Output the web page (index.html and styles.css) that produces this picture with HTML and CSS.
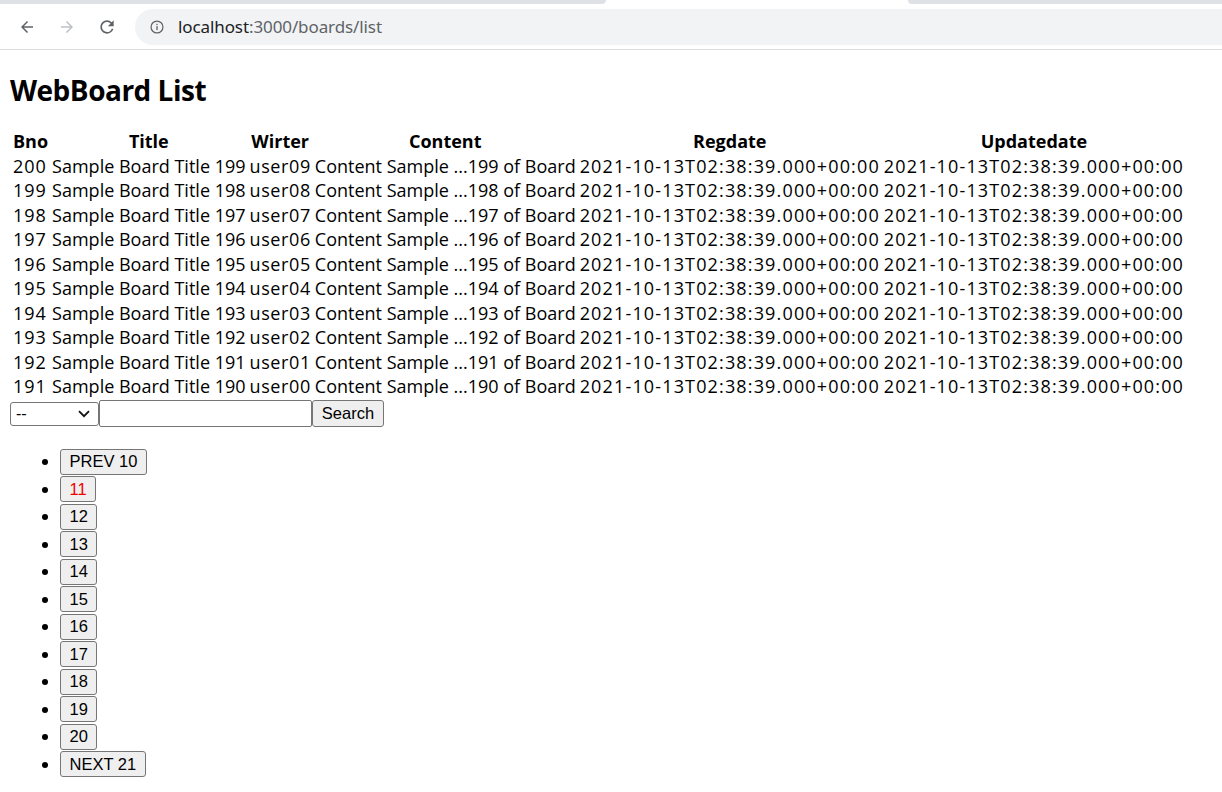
FILE: index.html
```html
<!DOCTYPE html>
<html lang="en">
<head>
<meta charset="utf-8">
<title>WebBoard List</title>
<link rel="stylesheet" href="styles.css">
</head>
<body>
<div class="chrome">
  <div class="tabstrip">
    <div class="tab-left"></div>
    <div class="tab-active"></div>
    <div class="tab-right"></div>
  </div>
  <div class="toolbar">
    <div class="nav">
      <span class="navbtn">
        <svg width="18" height="18" viewBox="0 0 24 24"><path d="M20 11H7.83l5.59-5.59L12 4l-8 8 8 8 1.41-1.41L7.83 13H20v-2z" fill="#5f6368"/></svg>
      </span>
      <span class="navbtn">
        <svg width="18" height="18" viewBox="0 0 24 24"><path d="M12 4l-1.41 1.41L16.17 11H4v2h12.17l-5.58 5.59L12 20l8-8z" fill="#bdc1c6"/></svg>
      </span>
      <span class="navbtn">
        <svg width="20" height="20" viewBox="0 0 24 24"><path d="M17.65 6.35A7.958 7.958 0 0 0 12 4a8 8 0 1 0 7.730 10h-2.08A5.990 5.990 0 0 1 12 18a6 6 0 1 1 0-12c1.66 0 3.14.69 4.22 1.780L13 11h7V4l-2.35 2.35z" fill="#5f6368"/></svg>
      </span>
    </div>
    <div class="omnibox">
      <svg class="info" width="14" height="14" viewBox="0 0 16 16"><circle cx="8" cy="8" r="6.8" fill="none" stroke="#5f6368" stroke-width="1.4"/><rect x="7.25" y="7" width="1.5" height="4.5" fill="#5f6368"/><rect x="7.25" y="4.3" width="1.5" height="1.5" fill="#5f6368"/></svg>
      <span class="url"><span class="host">localhost</span>:3000/boards/list</span>
    </div>
  </div>
</div>

<main class="page">
  <h2 class="title">WebBoard List</h2>
  <table class="board">
    <thead>
      <tr><th>Bno</th><th>Title</th><th>Wirter</th><th>Content</th><th>Regdate</th><th>Updatedate</th></tr>
    </thead>
    <tbody>
      <tr><td class="num">200</td><td>Sample Board Title 199</td><td class="writer">user09</td><td>Content Sample ...199 of Board</td><td class="date">2021-10-13T02:38:39.000+00:00</td><td class="date">2021-10-13T02:38:39.000+00:00</td></tr>
      <tr><td class="num">199</td><td>Sample Board Title 198</td><td class="writer">user08</td><td>Content Sample ...198 of Board</td><td class="date">2021-10-13T02:38:39.000+00:00</td><td class="date">2021-10-13T02:38:39.000+00:00</td></tr>
      <tr><td class="num">198</td><td>Sample Board Title 197</td><td class="writer">user07</td><td>Content Sample ...197 of Board</td><td class="date">2021-10-13T02:38:39.000+00:00</td><td class="date">2021-10-13T02:38:39.000+00:00</td></tr>
      <tr><td class="num">197</td><td>Sample Board Title 196</td><td class="writer">user06</td><td>Content Sample ...196 of Board</td><td class="date">2021-10-13T02:38:39.000+00:00</td><td class="date">2021-10-13T02:38:39.000+00:00</td></tr>
      <tr><td class="num">196</td><td>Sample Board Title 195</td><td class="writer">user05</td><td>Content Sample ...195 of Board</td><td class="date">2021-10-13T02:38:39.000+00:00</td><td class="date">2021-10-13T02:38:39.000+00:00</td></tr>
      <tr><td class="num">195</td><td>Sample Board Title 194</td><td class="writer">user04</td><td>Content Sample ...194 of Board</td><td class="date">2021-10-13T02:38:39.000+00:00</td><td class="date">2021-10-13T02:38:39.000+00:00</td></tr>
      <tr><td class="num">194</td><td>Sample Board Title 193</td><td class="writer">user03</td><td>Content Sample ...193 of Board</td><td class="date">2021-10-13T02:38:39.000+00:00</td><td class="date">2021-10-13T02:38:39.000+00:00</td></tr>
      <tr><td class="num">193</td><td>Sample Board Title 192</td><td class="writer">user02</td><td>Content Sample ...192 of Board</td><td class="date">2021-10-13T02:38:39.000+00:00</td><td class="date">2021-10-13T02:38:39.000+00:00</td></tr>
      <tr><td class="num">192</td><td>Sample Board Title 191</td><td class="writer">user01</td><td>Content Sample ...191 of Board</td><td class="date">2021-10-13T02:38:39.000+00:00</td><td class="date">2021-10-13T02:38:39.000+00:00</td></tr>
      <tr><td class="num">191</td><td>Sample Board Title 190</td><td class="writer">user00</td><td>Content Sample ...190 of Board</td><td class="date">2021-10-13T02:38:39.000+00:00</td><td class="date">2021-10-13T02:38:39.000+00:00</td></tr>
    </tbody>
  </table>

  <form class="search">
    <div class="fake-select">
      <span>--</span>
      <svg width="12" height="8" viewBox="0 0 12 8"><path d="M1 1.2l5 5 5-5" fill="none" stroke="#111" stroke-width="1.8"/></svg>
    </div>
    <input class="keyword" type="text">
    <button class="btn" type="button">Search</button>
  </form>

  <ul class="pager">
    <li><button class="btn" type="button">PREV 10</button></li>
    <li><button class="btn current" type="button">11</button></li>
    <li><button class="btn" type="button">12</button></li>
    <li><button class="btn" type="button">13</button></li>
    <li><button class="btn" type="button">14</button></li>
    <li><button class="btn" type="button">15</button></li>
    <li><button class="btn" type="button">16</button></li>
    <li><button class="btn" type="button">17</button></li>
    <li><button class="btn" type="button">18</button></li>
    <li><button class="btn" type="button">19</button></li>
    <li><button class="btn" type="button">20</button></li>
    <li><button class="btn" type="button">NEXT 21</button></li>
  </ul>
</main>
</body>
</html>
```

FILE: styles.css
```css
* { box-sizing: border-box; }

html, body {
  margin: 0;
  padding: 0;
  background: #ffffff;
}

body {
  font-family: "Open Sans", "Noto Sans CJK KR", sans-serif;
  color: #000;
}

/* ---------- browser chrome ---------- */
.chrome {
  height: 50px;
  border-bottom: 1px solid #dadce0;
  background: #fff;
}

.tabstrip {
  display: flex;
  height: 4px;
}

.tab-left {
  width: 606px;
  background: #dee1e6;
  border-bottom-right-radius: 6px;
}

.tab-active {
  width: 302px;
  background: #fff;
}

.tab-right {
  flex: 1;
  background: #dee1e6;
  border-bottom-left-radius: 6px;
}

.toolbar {
  display: flex;
  align-items: center;
  height: 45px;
}

.nav {
  display: flex;
  align-items: center;
  padding-left: 9px;
  gap: 4px;
}

.navbtn {
  width: 36px;
  height: 36px;
  display: flex;
  align-items: center;
  justify-content: center;
}

.omnibox {
  margin-left: 10px;
  flex: 1;
  height: 36px;
  background: #f1f3f4;
  border-radius: 18px 0 0 18px;
  display: flex;
  align-items: center;
  padding-left: 15px;
}

.info { flex: none; }

.url {
  margin-left: 14px;
  font-family: "Noto Sans", "Open Sans", sans-serif;
  font-size: 17px;
  color: #5f6368;
  letter-spacing: -0.1px;
}

.host { color: #202124; }

/* ---------- page ---------- */
.page {
  padding: 0 10px;
}

.title {
  margin: 22px 0 20px;
  font-size: 28px;
  line-height: 36px;
  font-weight: 700;
  letter-spacing: -0.5px;
}

.board {
  border-spacing: 2px;
  font-size: 18px;
  line-height: 20.5px;
  margin-top: 1px;
}

.board th,
.board td {
  padding: 1px;
  white-space: nowrap;
}

.board th {
  font-weight: 700;
  text-align: center;
}

.board td { text-align: left; }

.board td.num { letter-spacing: 1px; }

.board td.writer { letter-spacing: 0.6px; }

.board td.date { letter-spacing: 1.15px; }

/* search form */
.search {
  display: flex;
  align-items: center;
  height: 28px;
}

.fake-select {
  width: 89px;
  height: 24px;
  border: 1px solid #767676;
  border-radius: 3px;
  display: flex;
  align-items: center;
  justify-content: space-between;
  padding: 0 8px 0 5px;
  font-family: "Liberation Sans", Arial, sans-serif;
  font-size: 16px;
}

.keyword {
  width: 213px;
  height: 27px;
  border: 1px solid #767676;
  border-radius: 2px;
  padding: 0 3px;
  margin: 0;
  font-size: 16px;
}

.btn {
  font-family: "Liberation Sans", Arial, sans-serif;
  font-size: 16.5px;
  color: #000;
  background: #efefef;
  border: 1px solid #767676;
  border-radius: 3px;
  height: 26px;
  padding: 0 8.5px;
  margin: 0;
}

.search .btn { height: 27px; width: 72px; padding: 0; }

.btn.current { color: #f00000; }

.pager {
  margin: 21px 0 0;
  padding-left: 50px;
  font-size: 16px;
}

.pager li {
  height: 27.5px;
}
```
